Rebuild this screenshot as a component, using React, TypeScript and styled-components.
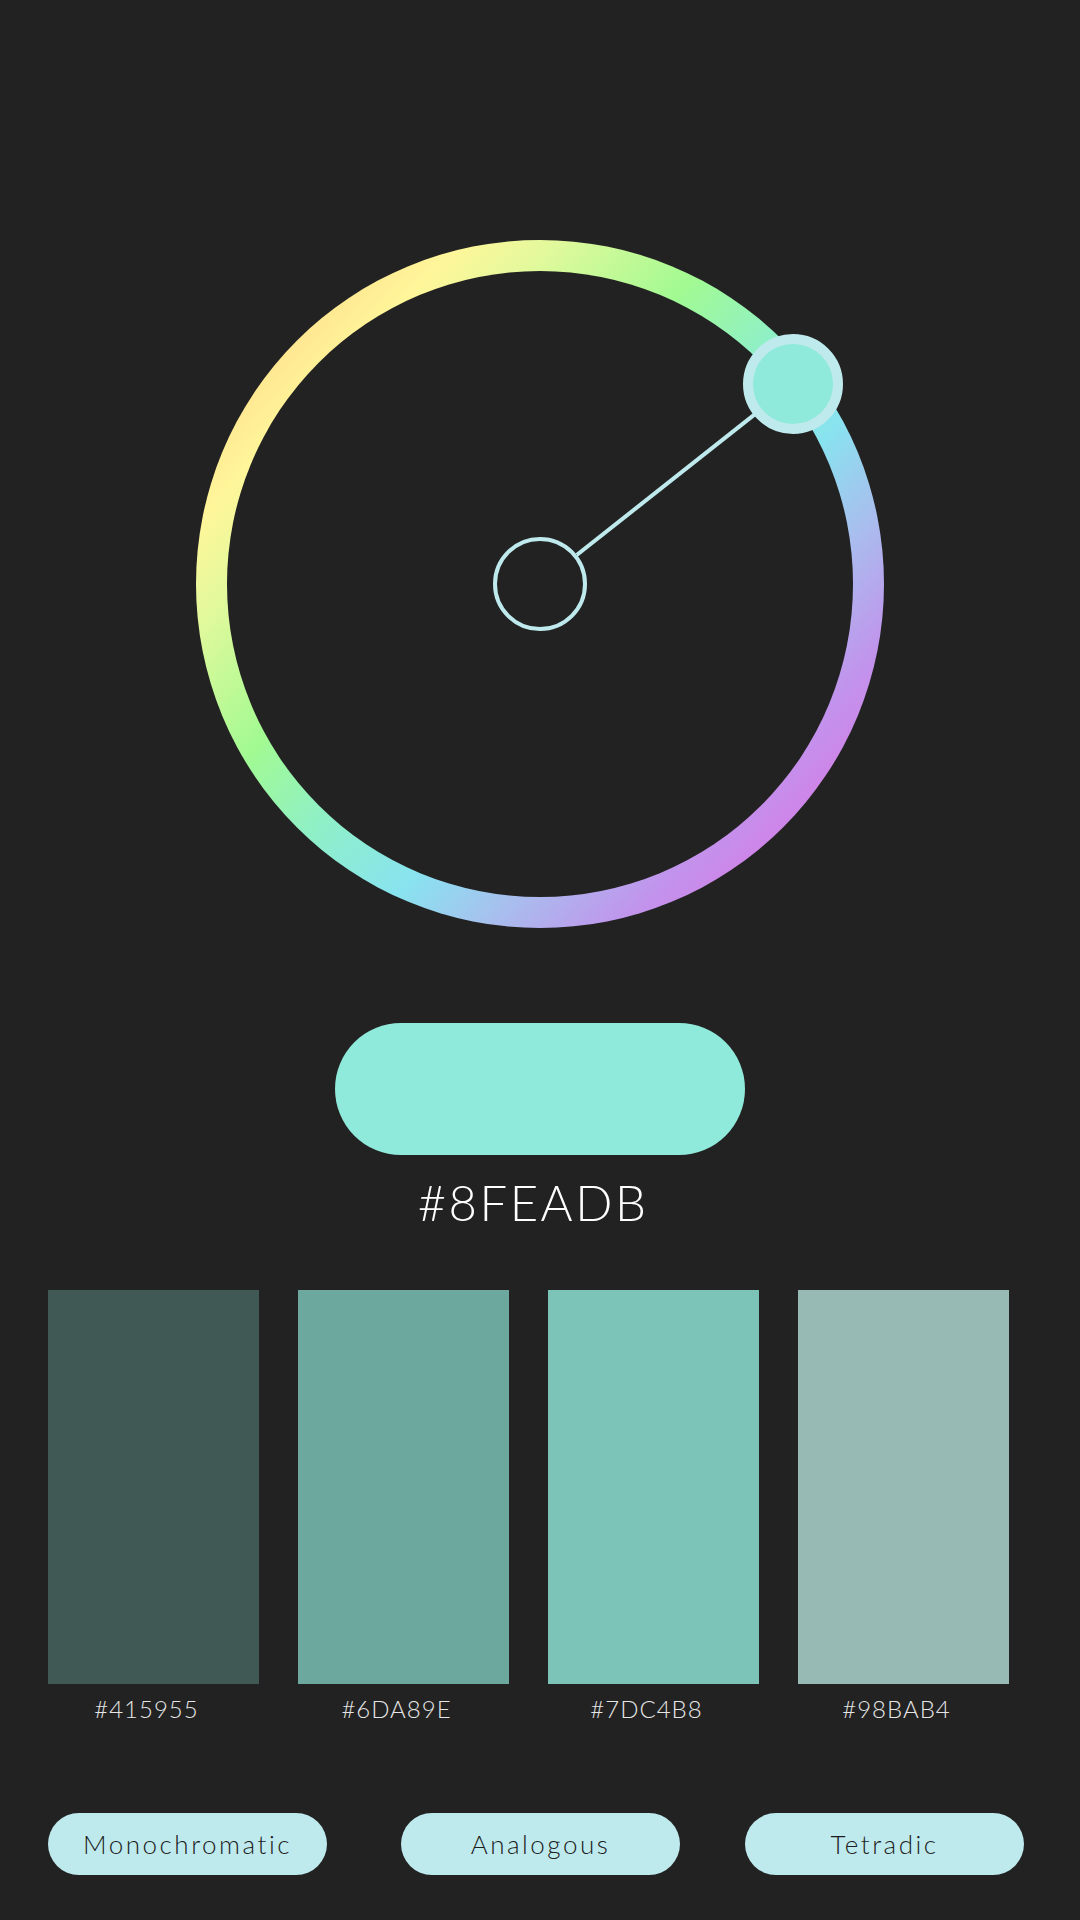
import React from "react";
import styled, { createGlobalStyle } from "styled-components";

const GlobalStyle = createGlobalStyle`
  html, body {
    margin: 0;
    padding: 0;
    background: #222222;
  }
  body {
    font-family: "Lato", "Inter", "Liberation Sans", sans-serif;
  }
  * { box-sizing: border-box; }
`;

const Page = styled.main`
  width: 1080px;
  min-height: 1920px;
  background: #222222;
  display: flex;
  flex-direction: column;
  align-items: center;
  padding-top: 240px;
`;

const Wheel = styled.div`
  position: relative;
  width: 688px;
  height: 688px;
  border-radius: 50%;
  padding: 31px;
  background: linear-gradient(
    133deg,
    #ffdf8e 0%,
    #ffe690 14%,
    #fff69a 20%,
    #e2f99c 27%,
    #a2fa92 40%,
    #8ff0c6 50%,
    #88e3ef 61%,
    #a8bfee 70%,
    #c194ec 80%,
    #d083e8 86%,
    #d27fe6 100%
  );
`;

const WheelInner = styled.div`
  width: 100%;
  height: 100%;
  border-radius: 50%;
  background: #222222;
  display: flex;
  align-items: center;
  justify-content: center;
`;

const Hub = styled.div`
  width: 94px;
  height: 94px;
  border-radius: 50%;
  border: 4.5px solid #bfeaed;
`;

const Spoke = styled.div<{ $angle: number; $length: number; $start: number }>`
  position: absolute;
  left: 344px;
  top: 342px;
  height: 4px;
  width: ${(p) => p.$length}px;
  transform-origin: 0 50%;
  transform: rotate(${(p) => p.$angle}deg);
  background: linear-gradient(
    to right,
    transparent ${(p) => p.$start}px,
    #bfeaed ${(p) => p.$start}px
  );
`;

const Knob = styled.div<{ $color: string }>`
  position: absolute;
  left: 547px;
  top: 94px;
  width: 100px;
  height: 100px;
  border-radius: 50%;
  border: 10px solid #bfeaed;
  background: ${(p) => p.$color};
`;

const Preview = styled.div<{ $color: string }>`
  margin-top: 95px;
  width: 410px;
  height: 132px;
  border-radius: 66px;
  background: ${(p) => p.$color};
`;

const HexLabel = styled.div`
  margin-top: 17px;
  font-size: 49px;
  line-height: 60px;
  font-weight: 300;
  letter-spacing: 2.5px;
  padding-right: 14px;
  color: #ffffff;
`;

const SwatchRow = styled.div`
  margin-top: 58px;
  width: 961px;
  margin-left: 48px;
  align-self: flex-start;
  display: flex;
  justify-content: space-between;
`;

const SwatchColumn = styled.div`
  width: 211px;
  display: flex;
  flex-direction: column;
  align-items: center;
`;

const Swatch = styled.div<{ $color: string }>`
  width: 211px;
  height: 394px;
  background: ${(p) => p.$color};
`;

const SwatchLabel = styled.div`
  margin-top: 10px;
  padding-right: 14px;
  font-size: 24px;
  line-height: 29px;
  font-weight: 300;
  letter-spacing: 1px;
  color: #e6e6e6;
`;

const SchemeRow = styled.div`
  margin-top: 90px;
  margin-left: 48px;
  align-self: flex-start;
  display: flex;
`;

const SchemeButton = styled.button<{ $gap: number }>`
  width: 279px;
  height: 62px;
  margin-left: ${(p) => p.$gap}px;
  border: none;
  border-radius: 31px;
  background: #bfeaed;
  color: #1c1c1c;
  font-family: "Lato", "Inter", "Liberation Sans", sans-serif;
  font-size: 26px;
  font-weight: 300;
  letter-spacing: 2.5px;
  padding: 0;
  cursor: pointer;
`;

const swatches = ["#415955", "#6DA89E", "#7DC4B8", "#98BAB4"];
const schemes = [
  { name: "Monochromatic", gap: 0 },
  { name: "Analogous", gap: 74 },
  { name: "Tetradic", gap: 65 },
];

export default function App() {
  const color = "#8FEADB";
  return (
    <>
      <GlobalStyle />
      <Page>
        <Wheel>
          <WheelInner>
            <Hub />
          </WheelInner>
          <Spoke $angle={-38.3} $length={276} $start={47} />
          <Knob $color={color} />
        </Wheel>
        <Preview $color={color} />
        <HexLabel>{color}</HexLabel>
        <SwatchRow>
          {swatches.map((s) => (
            <SwatchColumn key={s}>
              <Swatch $color={s} />
              <SwatchLabel>{s}</SwatchLabel>
            </SwatchColumn>
          ))}
        </SwatchRow>
        <SchemeRow>
          {schemes.map((s) => (
            <SchemeButton key={s.name} $gap={s.gap}>
              {s.name}
            </SchemeButton>
          ))}
        </SchemeRow>
      </Page>
    </>
  );
}
